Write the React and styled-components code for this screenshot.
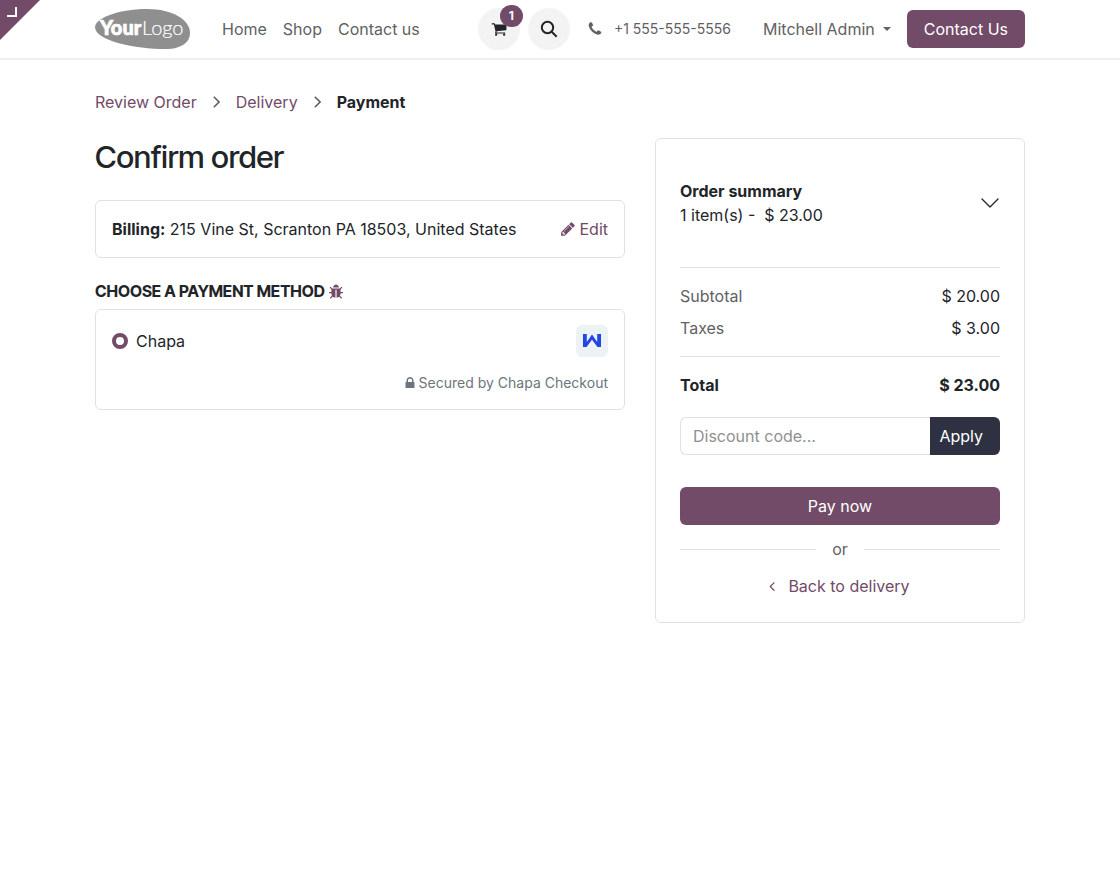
import { useState } from "react";
import styled, { createGlobalStyle, ThemeProvider } from "styled-components";

const theme = {
  colors: {
    primary: "#714b67",
    secondary: "#2d3142",
    text: "#212529",
    muted: "#5f6163",
    hint: "#6c757d",
    border: "#dee2e6",
    soft: "#f3f3f3",
  },
  fonts: {
    headings: '"Inter Tight", "Inter Display", Inter, sans-serif',
  },
  radius: "6px",
};

// Font Awesome 4 outlines, drawn on a 1792 grid
const icons = {
  cart: "M704 1536q0 52-38 90t-90 38-90-38-38-90 38-90 90-38 90 38 38 90zm896 0q0 52-38 90t-90 38-90-38-38-90 38-90 90-38 90 38 38 90zm128-1088v512q0 24-16.5 42.5t-40.5 21.5l-1044 122q13 60 13 70 0 16-24 64h920q26 0 45 19t19 45-19 45-45 19h-1024q-26 0-45-19t-19-45q0-11 8-31.500t16-36 21.500-40 15.500-29.500l-177-823h-204q-26 0-45-19t-19-45 19-45 45-19h256q16 0 28.500 6.500t19.500 15.500 13 24.500 8 26 5.500 29.500 4.500 26h1201q26 0 45 19t19 45z",
  phone:
    "M1600 1240q0 27-10 70.500t-21 68.500q-21 50-122 106-94 51-186 51-27 0-53-3.500t-57.500-12.500-47-14.500-55.500-20.500-49-18q-98-35-175-83-127-79-264-216t-216-264q-48-77-83-175-3-9-18-49t-20.500-55.500-14.500-47-12.500-57.500-3.500-53q0-92 51-186 56-101 106-122 25-11 68.500-21t70.500-10q14 0 21 3 18 6 53 76 11 19 30 54t35 63.500 31 53.500q3 4 17.500 25t21.500 35.500 7 28.500q0 20-28.500 50t-62 55-62 53-28.500 46q0 9 5 22.500t8.500 20.500 14 24 11.500 19q76 137 174 235t235 174q2 1 19 11.500t24 14 20.500 8.500 22.500 5q18 0 46-28.500t53-62 55-62 50-28.500q14 0 28.500 7t35.500 21.500 25 17.500q25 15 53.500 31t63.500 35 54 30q70 35 76 53 3 7 3 21z",
  pencil:
    "M491 1536l91-91-235-235-91 91v107h128v128h107zm523-928q0-22-22-22-10 0-17 7l-542 542q-7 7-7 17 0 22 22 22 10 0 17-7l542-542q7-7 7-17zm-54-192l416 416-832 832h-416v-416zm683 96q0 53-37 90l-166 166-416-416 166-165q36-38 90-38 53 0 91 38l235 234q37 39 37 91z",
  bug: "M1696 960q0 26-19 45t-45 19h-224q0 171-67 290l208 209q19 19 19 45t-19 45q-18 19-45 19t-45-19l-198-197q-5 5-15 13t-42 28.500-65 36.500-82 29-97 13v-896h-128v896q-51 0-101.500-13.500t-87-33-66-39-43.500-32.500l-15-14-183 207q-20 21-48 21-24 0-43-16-19-18-20.500-44.500t15.500-46.500l202-227q-58-114-58-274h-224q-26 0-45-19t-19-45 19-45 45-19h224v-294l-173-173q-19-19-19-45t19-45 45-19 45 19l173 173h844l173-173q19-19 45-19t45 19 19 45-19 45l-173 173v294h224q26 0 45 19t19 45zm-480-576h-640q0-133 93.500-226.500t226.500-93.500 226.500 93.500 93.500 226.500z",
  lock: "M640 768h512v-192q0-106-75-181t-181-75-181 75-75 181v192zm832 96v576q0 40-28 68t-68 28h-960q-40 0-68-28t-28-68v-576q0-40 28-68t68-28h32v-192q0-184 132-316t316-132 316 132 132 316v192h32q40 0 68 28t28 68z",
  angleLeft:
    "M1203 544q0 13-10 23l-393 393 393 393q10 10 10 23t-10 23l-50 50q-10 10-23 10t-23-10l-466-466q-10-10-10-23t10-23l466-466q10-10 23-10t23 10l50 50q10 10 10 23z",
};

function Icon({ name, size = 16 }) {
  return (
    <svg width={size} height={size} viewBox="0 0 1792 1792" fill="currentColor" aria-hidden="true">
      <path d={icons[name]} />
    </svg>
  );
}

function Logo() {
  return (
    <svg width="95" height="40" viewBox="0 0 95 40" role="img" aria-label="Your Logo">
      <path
        d="M0 18C0 10 22 0 52 0c26 0 43 11 43 24 0 10-10 16-24 16C40 40 0 32 0 18z"
        fill="#8f8f8f"
      />
      <g fill="#fff" stroke="#fff" fontSize="20">
        <text x="5" y="26" fontFamily="Lato" fontWeight="900" strokeWidth="0.7">
          Your
        </text>
        <text x="47" y="26" fontFamily="Lato" fontWeight="300" strokeWidth="0.2">
          Logo
        </text>
      </g>
    </svg>
  );
}

function Header() {
  return (
    <HeaderStyled>
      <Container className="bar">
        <a href="#home" className="logo">
          <Logo />
        </a>
        <nav>
          <a href="#home">Home</a>
          <a href="#shop">Shop</a>
          <a href="#contact">Contact us</a>
        </nav>
        <div className="tools">
          <RoundButton aria-label="Cart">
            <Icon name="cart" />
            <Badge>1</Badge>
          </RoundButton>
          <RoundButton aria-label="Search">
            <svg width="18" height="18" viewBox="0 0 18 18" fill="none" stroke="currentColor" strokeWidth="2">
              <circle cx="7.500" cy="7.500" r="5.700" />
              <path d="M11.700 11.700l5 5" />
            </svg>
          </RoundButton>
        </div>
        <a href="tel:+15555555556" className="phone">
          <Icon name="phone" />
          <span>+1 555-555-5556</span>
        </a>
        <button className="user">
          Mitchell Admin
          <svg width="8" height="4" viewBox="0 0 8 4" fill="currentColor" aria-hidden="true">
            <path d="M0 0h8L4 4z" />
          </svg>
        </button>
        <PrimaryButton>Contact Us</PrimaryButton>
      </Container>
    </HeaderStyled>
  );
}

function Separator() {
  return (
    <svg width="7" height="12" viewBox="0 0 7 12" fill="none" stroke="#5f6163" strokeWidth="1.600" aria-hidden="true">
      <path d="M.8.8L6 6 .8 11.200" />
    </svg>
  );
}

function PaymentMethod() {
  return (
    <section>
      <SectionTitle>
        CHOOSE A PAYMENT METHOD
        <a href="#debug" aria-label="Availability report">
          <Icon name="bug" />
        </a>
      </SectionTitle>
      <Method>
        <div className="option">
          <input type="radio" id="chapa" name="method" defaultChecked />
          <label htmlFor="chapa">Chapa</label>
          <svg width="32" height="32" viewBox="0 0 32 32" aria-hidden="true">
            <rect width="32" height="32" rx="6" fill="#edf3f5" />
            <path d="M7 9h3.800v8L16 9.500 21.200 17V9H25v13h-3.500L16 14.800 10.500 22H7z" fill="#2346e8" />
          </svg>
        </div>
        <p>
          <Icon name="lock" size={14} />
          Secured by Chapa Checkout
        </p>
      </Method>
    </section>
  );
}

function OrderSummary() {
  const [code, setCode] = useState("");

  return (
    <Summary>
      <button className="toggle">
        <span>
          <b>Order summary</b>
          <span>1 item(s) -&nbsp; $ 23.00</span>
        </span>
        <svg width="20" height="20" viewBox="0 0 20 20" fill="none" stroke="currentColor" strokeWidth="1.300">
          <path d="M2 6l8 8 8-8" strokeLinecap="round" strokeLinejoin="round" />
        </svg>
      </button>
      <table>
        <tbody>
          <tr className="first">
            <th scope="row">Subtotal</th>
            <td>$ 20.00</td>
          </tr>
          <tr className="last">
            <th scope="row">Taxes</th>
            <td>$ 3.00</td>
          </tr>
          <tr className="total">
            <th scope="row">Total</th>
            <td>$ 23.00</td>
          </tr>
        </tbody>
      </table>
      <Discount onSubmit={(e) => e.preventDefault()}>
        <input
          aria-label="Discount code"
          placeholder="Discount code..."
          value={code}
          onChange={(e) => setCode(e.target.value)}
        />
        <button>Apply</button>
      </Discount>
      <PrimaryButton $full>Pay now</PrimaryButton>
      <Or>or</Or>
      <a href="#delivery" className="back">
        <Icon name="angleLeft" />
        Back to delivery
      </a>
    </Summary>
  );
}

export default function App() {
  return (
    <ThemeProvider theme={theme}>
      <GlobalStyle />
      <Corner href="#backend" aria-label="Back to edit mode">
        <svg width="40" height="40" viewBox="0 0 40 40">
          <path d="M0 0h40L0 40z" fill="#714b67" />
          <path d="M7 16h9V7" fill="none" stroke="#fff" strokeWidth="2" />
        </svg>
      </Corner>
      <Header />
      <Container as="main">
        <Breadcrumb aria-label="Checkout steps">
          <a href="#review">Review Order</a>
          <Separator />
          <a href="#delivery">Delivery</a>
          <Separator />
          <b>Payment</b>
        </Breadcrumb>
        <Columns>
          <div>
            <Title>Confirm order</Title>
            <Billing>
              <span>
                <b>Billing:</b> 215 Vine St, Scranton PA 18503, United States
              </span>
              <a href="#edit">
                <Icon name="pencil" />
                Edit
              </a>
            </Billing>
            <PaymentMethod />
          </div>
          <OrderSummary />
        </Columns>
      </Container>
    </ThemeProvider>
  );
}

const GlobalStyle = createGlobalStyle`
  * {
    box-sizing: border-box;
  }

  body {
    margin: 0;
    background: #fff;
    color: ${theme.colors.text};
    font-family: Inter, sans-serif;
    font-size: 16px;
    line-height: 24px;
  }

  a {
    color: ${theme.colors.primary};
    text-decoration: none;
  }

  button,
  input {
    font: inherit;
  }

  button {
    border: none;
    cursor: pointer;
  }

  svg {
    flex-shrink: 0;
  }
`;

const Container = styled.div`
  max-width: 960px;
  margin: 0 auto;
  padding: 0 15px;
`;

const Corner = styled.a`
  position: absolute;
  top: 0;
  left: 0;
  line-height: 0;
`;

const HeaderStyled = styled.header`
  border-bottom: 2px solid #efefef;

  .bar {
    display: flex;
    align-items: center;
    height: 58px;
  }

  .logo {
    display: flex;
    margin-right: 32px;
  }

  nav {
    display: flex;
    gap: 16px;
    margin-right: auto;
    white-space: nowrap;

    a {
      color: ${({ theme }) => theme.colors.muted};
    }
  }

  .tools {
    display: flex;
    gap: 8px;
    margin-right: 17px;
  }

  .phone {
    display: flex;
    align-items: center;
    gap: 11px;
    margin-right: 32px;
    color: ${({ theme }) => theme.colors.muted};
    font-size: 14px;
    white-space: nowrap;
  }

  .user {
    display: flex;
    align-items: center;
    gap: 8px;
    margin-right: 16px;
    padding: 0;
    background: none;
    color: ${({ theme }) => theme.colors.muted};
    white-space: nowrap;
  }
`;

const RoundButton = styled.button`
  position: relative;
  display: flex;
  align-items: center;
  justify-content: center;
  width: 42px;
  height: 42px;
  padding: 0;
  border-radius: 50%;
  background: ${({ theme }) => theme.colors.soft};
  color: ${({ theme }) => theme.colors.text};
`;

const Badge = styled.span`
  position: absolute;
  top: -3px;
  right: -3px;
  width: 23px;
  border-radius: 12px;
  background: ${({ theme }) => theme.colors.primary};
  color: #fff;
  font-size: 12px;
  font-weight: 700;
  line-height: 22px;
`;

const PrimaryButton = styled.button`
  width: ${({ $full }) => ($full ? "100%" : "auto")};
  height: 38px;
  padding: 0 17px;
  border-radius: ${({ theme }) => theme.radius};
  background: ${({ theme }) => theme.colors.primary};
  color: #fff;
  white-space: nowrap;
`;

const Breadcrumb = styled.nav`
  display: flex;
  align-items: center;
  gap: 16px;
  padding: 30px 0 24px;
`;

const Columns = styled.div`
  display: grid;
  grid-template-columns: repeat(12, 1fr);
  align-items: start;
  gap: 30px;

  > :first-child {
    grid-column: span 7;
  }

  > :last-child {
    grid-column: span 5;
  }
`;

const Title = styled.h1`
  margin: 0 0 24px;
  font-family: ${({ theme }) => theme.fonts.headings};
  font-size: 31px;
  font-weight: 500;
  font-variation-settings: "opsz" 32;
  line-height: 38px;
`;

const Card = styled.div`
  border: 1px solid ${({ theme }) => theme.colors.border};
  border-radius: ${({ theme }) => theme.radius};
`;

const Billing = styled(Card)`
  display: flex;
  justify-content: space-between;
  margin-bottom: 24px;
  padding: 16px;

  a {
    display: flex;
    align-items: center;
    gap: 3px;
  }
`;

const SectionTitle = styled.h2`
  display: flex;
  align-items: center;
  gap: 3px;
  margin: 0 0 8px;
  font-family: ${({ theme }) => theme.fonts.headings};
  font-size: 16px;
  font-weight: 700;
  font-variation-settings: "opsz" 32;
  line-height: 19px;

  a {
    display: flex;
  }
`;

const Method = styled(Card)`
  padding: 15px 16px 17px;

  .option {
    display: flex;
    align-items: center;
    gap: 8px;
    height: 32px;
  }

  input {
    appearance: none;
    width: 16px;
    height: 16px;
    margin: 0;
    border: 4px solid ${({ theme }) => theme.colors.primary};
    border-radius: 50%;
    background: #fff;
  }

  label {
    flex: 1;
  }

  p {
    display: flex;
    align-items: center;
    justify-content: flex-end;
    gap: 2px;
    margin: 16px 0 0;
    color: ${({ theme }) => theme.colors.hint};
    font-size: 14px;
    line-height: 19px;
  }
`;

const Summary = styled(Card)`
  padding: 24px;

  .toggle {
    display: flex;
    align-items: center;
    justify-content: space-between;
    width: 100%;
    padding: 16px 0;
    background: none;
    color: inherit;
    text-align: left;

    b,
    span {
      display: block;
    }
  }

  table {
    width: 100%;
    margin-top: 24px;
    border-top: 1px solid ${({ theme }) => theme.colors.border};
    border-spacing: 0;
  }

  th,
  td {
    padding: 0 0 8px;
    font-weight: 400;
    text-align: left;
  }

  th {
    color: ${({ theme }) => theme.colors.muted};
  }

  td {
    text-align: right;
  }

  .first > * {
    padding-top: 16px;
  }

  .last > * {
    padding-bottom: 16px;
    border-bottom: 1px solid ${({ theme }) => theme.colors.border};
  }

  .total > * {
    padding: 16px 0 20px;
    color: inherit;
    font-weight: 700;
  }

  .back {
    display: flex;
    align-items: center;
    justify-content: center;
    gap: 8px;
    padding-right: 6px;
  }
`;

const Discount = styled.form`
  display: flex;
  height: 38px;
  margin-bottom: 32px;

  input {
    flex: 1;
    min-width: 0;
    padding: 0 12px;
    border: 1px solid ${({ theme }) => theme.colors.border};
    border-right: none;
    border-radius: 6px 0 0 6px;
    color: inherit;

    &::placeholder {
      color: #8f9091;
    }
  }

  button {
    padding: 0 17px 0 9px;
    border-radius: 0 6px 6px 0;
    background: ${({ theme }) => theme.colors.secondary};
    color: #fff;
  }
`;

const Or = styled.div`
  display: flex;
  align-items: center;
  gap: 16px;
  margin: 12px 0 13px;
  color: ${({ theme }) => theme.colors.muted};

  &::before,
  &::after {
    content: "";
    flex: 1;
    height: 1px;
    background: ${({ theme }) => theme.colors.border};
  }
`;
